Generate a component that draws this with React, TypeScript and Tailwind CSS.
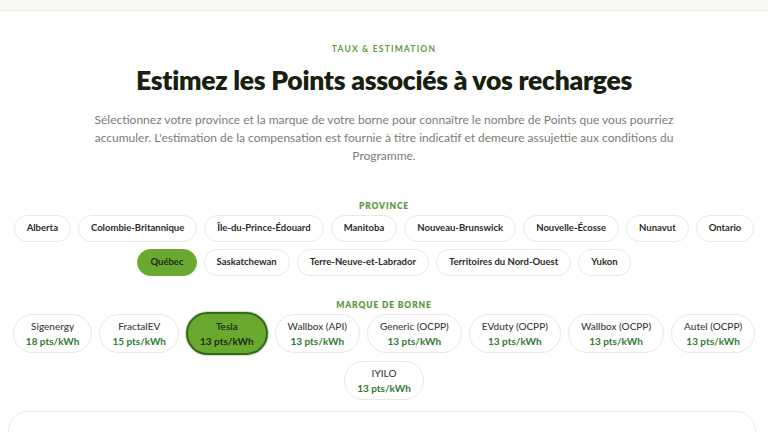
import React from "react";

const provinces = [
  "Alberta",
  "Colombie-Britannique",
  "Île-du-Prince-Édouard",
  "Manitoba",
  "Nouveau-Brunswick",
  "Nouvelle-Écosse",
  "Nunavut",
  "Ontario",
  "Québec",
  "Saskatchewan",
  "Terre-Neuve-et-Labrador",
  "Territoires du Nord-Ouest",
  "Yukon",
];

const brands: [string, string][] = [
  ["Sigenergy", "18 pts/kWh"],
  ["FractalEV", "15 pts/kWh"],
  ["Tesla", "13 pts/kWh"],
  ["Wallbox (API)", "13 pts/kWh"],
  ["Generic (OCPP)", "13 pts/kWh"],
  ["EVduty (OCPP)", "13 pts/kWh"],
  ["Wallbox (OCPP)", "13 pts/kWh"],
  ["Autel (OCPP)", "13 pts/kWh"],
  ["IYILO", "13 pts/kWh"],
];

export default function App() {
  return (
    <div
      className="w-[768px] h-[432px] overflow-hidden bg-white"
      style={{ fontFamily: "Lato, 'Noto Sans', sans-serif" }}
    >
      <div className="h-[11px] bg-[#f7f8f3] border-b border-[#e9eae4]" />
      <div className="flex flex-col items-center px-2">
        <div className="mt-[33px] text-[8.5px] font-bold tracking-[0.14em] text-[#5f9a3c] leading-[10px]">
          TAUX &amp; ESTIMATION
        </div>
        <h1 className="mt-[11px] text-[26.5px] font-extrabold text-[#17210f] leading-[30px] tracking-[-0.01em]">
          Estimez les Points associés à vos recharges
        </h1>
        <p className="mt-[16px] w-[600px] text-center text-[12px] leading-[18px] text-[#7b7d74]">
          Sélectionnez votre province et la marque de votre borne pour connaître le nombre de Points que vous pourriez accumuler. L'estimation de la compensation est fournie à titre indicatif et demeure assujettie aux conditions du Programme.
        </p>
        <div className="mt-[36px] text-[8.5px] font-extrabold tracking-[0.1em] text-[#5f9a3c] leading-[10px]">
          PROVINCE
        </div>
        <div className="mt-[4px] flex flex-wrap justify-center gap-x-[7px] gap-y-[7px] w-[752px]">
          {provinces.map((p) => {
            const sel = p === "Québec";
            return (
              <div
                key={p}
                className={
                  sel
                    ? "h-[27px] px-[12px] flex items-center rounded-full bg-[#6aa92f] border border-[#6aa92f] text-[9.5px] font-bold text-[#1c2a10]"
                    : "h-[27px] px-[12px] flex items-center rounded-full bg-white border border-[#e8e8e2] text-[9.5px] font-bold text-[#2a2d26]"
                }
              >
                {p}
              </div>
            );
          })}
        </div>
        <div className="mt-[24px] text-[8.5px] font-extrabold tracking-[0.1em] text-[#5f9a3c] leading-[10px]">
          MARQUE DE BORNE
        </div>
        <div className="mt-[2px] flex flex-wrap justify-center items-center gap-x-[7px] gap-y-[6px] w-[752px]">
          {brands.map(([n, pts]) => {
            const sel = n === "Tesla";
            return (
              <div
                key={n}
                className={
                  sel
                    ? "h-[43px] px-[12px] flex flex-col items-center justify-center rounded-full bg-[#6aa92f] border-[2px] border-[#2f6a1f] shadow-[0_0_0_1px_#cfe3bf] leading-[15px]"
                    : "h-[39px] px-[12px] flex flex-col items-center justify-center rounded-full bg-white border border-[#e8e8e2] leading-[15px]"
                }
              >
                <span className={sel ? "text-[10px] font-semibold text-[#1c2a10]" : "text-[10px] font-medium text-[#3b3e36]"}>
                  {n}
                </span>
                <span className={sel ? "text-[10px] font-bold text-[#1c2a10]" : "text-[10px] font-bold text-[#2f7a33]"}>
                  {pts}
                </span>
              </div>
            );
          })}
        </div>
        <div className="mt-[11px] w-[748px] h-[60px] self-start rounded-[20px] border border-[#ebebe6] bg-white" />
      </div>
    </div>
  );
}
